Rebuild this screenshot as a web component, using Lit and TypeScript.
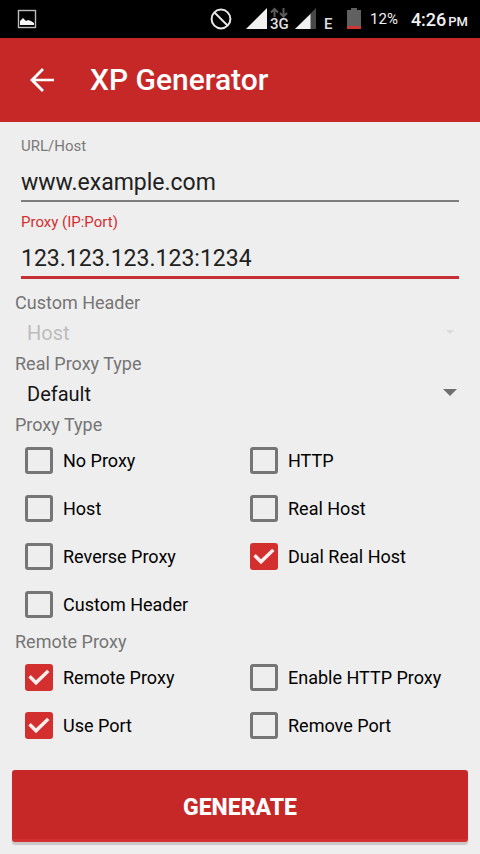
import { LitElement, html, svg, css } from "lit";
import { customElement, property, state } from "lit/decorators.js";

@customElement("status-bar")
class StatusBar extends LitElement {
  static styles = css`
    :host {
      display: flex;
      align-items: center;
      height: 38px;
      padding: 0 12px 0 17px;
      background: #000;
      color: #f0f0f0;
      font-family: Roboto, sans-serif;
    }
    svg {
      display: block;
      flex: none;
    }
    .spacer {
      flex: 1;
    }
    .signals {
      margin-left: 14px;
    }
    .battery {
      margin-left: 11px;
    }
    .percent {
      margin-left: 9px;
      font-size: 15px;
    }
    .clock {
      display: flex;
      align-items: baseline;
      gap: 2px;
      margin-left: 13px;
      font-size: 18px;
      font-weight: 500;
      white-space: nowrap;
    }
    .meridiem {
      font-size: 13px;
    }
    .net {
      font: 500 15px Roboto, sans-serif;
      fill: #e0e0e0;
    }
  `;

  render() {
    return html`
      <svg width="20" height="20" viewBox="0 0 20 20" aria-hidden="true">
        <rect x="1.5" y="1.5" width="17" height="17" fill="none" stroke="#bdbdbd" stroke-width="1.4" />
        <path d="M3 16v-4l3-3 3 3 2-1 3 1 3 2v2z" fill="#f5f5f5" />
      </svg>
      <span class="spacer"></span>
      <svg width="22" height="22" viewBox="0 0 22 22" aria-hidden="true">
        <g fill="none" stroke="#e8e8e8" stroke-width="2">
          <circle cx="11" cy="11" r="9.4" />
          <path d="M4.5 4.5l13 13" />
        </g>
      </svg>
      <svg class="signals" width="90" height="30" viewBox="0 -3 90 30" aria-hidden="true">
        <path d="M21 1v21H0z" fill="#f0f0f0" />
        <g fill="none" stroke="#5a5a5a" stroke-width="2">
          <path d="M28.500 10V3M25 5.500l3.500-3.500 3.500 3.500" />
          <path d="M37.500 1v7M34 6l3.500 3.500L41 6" />
        </g>
        <text class="net" x="24" y="22">3G</text>
        <path d="M70 1v21H49z" fill="#484848" />
        <path d="M64.500 7v15H49z" fill="#f0f0f0" />
        <text class="net" x="78" y="22">E</text>
      </svg>
      <svg class="battery" width="14" height="24" viewBox="0 0 14 24" aria-hidden="true">
        <path d="M4 1h6v2h4v19H0V3h4z" fill="#606060" />
        <path d="M0 19h14v3H0z" fill="#c93a35" />
      </svg>
      <span class="percent">12%</span>
      <span class="clock"><span>4:26</span><span class="meridiem">PM</span></span>
    `;
  }
}

@customElement("proxy-field")
class ProxyField extends LitElement {
  @property() label = "";
  @property() value = "";
  @property({ type: Boolean, reflect: true }) active = false;

  static styles = css`
    :host {
      display: block;
      font-family: Roboto, sans-serif;
    }
    label {
      display: block;
      height: 20px;
      line-height: 20px;
      font-size: 15px;
      color: #7a7a7a;
    }
    input {
      box-sizing: border-box;
      display: block;
      width: 100%;
      height: 46px;
      margin-bottom: 10px;
      padding: 8px 0 0;
      border: 0;
      border-bottom: 2px solid #7d7d7d;
      border-radius: 0;
      background: transparent;
      outline: none;
      font: 23px Roboto, sans-serif;
      color: #212121;
    }
    :host([active]) label {
      color: #d32f2f;
    }
    :host([active]) input {
      height: 47px;
      border-bottom: 3px solid #c62f33;
    }
  `;

  render() {
    return html`
      <label for="field">${this.label}</label>
      <input id="field" type="text" .value=${this.value} />
    `;
  }
}

@customElement("proxy-select")
class ProxySelect extends LitElement {
  @property() label = "";
  @property() value = "";
  @property({ type: Boolean, reflect: true }) disabled = false;

  static styles = css`
    :host {
      display: block;
      font-family: Roboto, sans-serif;
    }
    label {
      display: block;
      height: 24px;
      line-height: 24px;
      font-size: 18px;
      color: #757575;
    }
    .spinner {
      display: grid;
      align-items: center;
      height: 37px;
    }
    select,
    svg {
      grid-area: 1 / 1;
    }
    select {
      appearance: none;
      width: 100%;
      height: 37px;
      padding: 0 36px 2px 12px;
      border: 0;
      background: transparent;
      font: 20px Roboto, sans-serif;
      color: #151515;
      opacity: 1;
    }
    svg {
      justify-self: end;
      margin: 0 8px 4px 0;
      fill: #6f6f6f;
      pointer-events: none;
    }
    :host([disabled]) select {
      color: #bcbcbc;
    }
    :host([disabled]) svg {
      fill: #dadada;
    }
  `;

  render() {
    return html`
      <label for="choice">${this.label}</label>
      <div class="spinner">
        <select id="choice" ?disabled=${this.disabled}>
          <option>${this.value}</option>
        </select>
        <svg width="14" height="10" viewBox="0 0 14 10" aria-hidden="true">
          ${this.disabled ? svg`<path d="M3 3h8L7 7z" />` : svg`<path d="M0 1h14L7 8z" />`}
        </svg>
      </div>
    `;
  }
}

@customElement("proxy-check")
class ProxyCheck extends LitElement {
  @property() label = "";
  @property({ type: Boolean }) checked = false;

  static styles = css`
    :host {
      display: block;
      font-family: Roboto, sans-serif;
    }
    label {
      display: flex;
      align-items: flex-start;
      gap: 10px;
      height: 38px;
      padding: 10px 0 0 10px;
      font-size: 18px;
      line-height: 28px;
      color: #000;
      white-space: nowrap;
    }
    .box {
      display: grid;
      flex: none;
      width: 28px;
      height: 27px;
    }
    input,
    svg {
      grid-area: 1 / 1;
    }
    input {
      appearance: none;
      box-sizing: border-box;
      width: 28px;
      height: 27px;
      margin: 0;
      border: 3px solid #757575;
      border-radius: 3px;
    }
    input:checked {
      border-color: #d32f2f;
      background: #d32f2f;
    }
    svg {
      display: none;
      fill: #fbeeee;
      pointer-events: none;
    }
    input:checked + svg {
      display: block;
    }
  `;

  render() {
    return html`
      <label>
        <span class="box">
          <input type="checkbox" .checked=${this.checked} />
          <svg width="28" height="27" viewBox="3 3 18 18" aria-hidden="true">
            <path d="M10 17.200l-5.100-5.200 1.600-1.600 3.500 3.500 7.400-7.100 1.600 1.600z" />
          </svg>
        </span>
        <span>${this.label}</span>
      </label>
    `;
  }
}

interface Choice {
  label: string;
  checked?: boolean;
}

@customElement("app-root")
class AppRoot extends LitElement {
  @state() private proxyTypes: Choice[] = [
    { label: "No Proxy" },
    { label: "HTTP" },
    { label: "Host" },
    { label: "Real Host" },
    { label: "Reverse Proxy" },
    { label: "Dual Real Host", checked: true },
    { label: "Custom Header" },
  ];

  @state() private remoteOptions: Choice[] = [
    { label: "Remote Proxy", checked: true },
    { label: "Enable HTTP Proxy" },
    { label: "Use Port", checked: true },
    { label: "Remove Port" },
  ];

  static styles = css`
    :host {
      display: flex;
      flex-direction: column;
      min-height: 100vh;
      background: #eee;
      font-family: Roboto, sans-serif;
    }
    .toolbar {
      display: flex;
      align-items: center;
      gap: 30px;
      height: 84px;
      padding: 0 24px;
      background: #c62828;
      color: #fff;
    }
    .back {
      display: block;
      width: 36px;
      height: 36px;
      padding: 0;
      border: 0;
      background: none;
    }
    .back svg {
      display: block;
      fill: #fff;
    }
    h1 {
      margin: 0;
      font-size: 30px;
      font-weight: 500;
      line-height: 36px;
    }
    form {
      display: block;
    }
    .fields {
      padding: 14px 21px 2px;
    }
    .options {
      display: flex;
      flex-direction: column;
      padding: 0 15px;
    }
    fieldset {
      min-width: 0;
      margin: 0;
      padding: 0;
      border: 0;
    }
    fieldset + fieldset {
      margin-top: 1px;
    }
    legend {
      height: 24px;
      padding: 0;
      font-size: 18px;
      line-height: 24px;
      color: #757575;
    }
    .checks {
      display: grid;
      grid-template-columns: 1fr 1fr;
    }
    .generate {
      display: block;
      width: calc(100% - 24px);
      height: 72px;
      margin: 20px 12px 12px;
      padding: 6px 0 0;
      border: 0;
      border-bottom: 3px solid #d32f2f;
      border-radius: 3px;
      background: #c62828;
      box-shadow: 0 3px 1px #c8c8c8;
      color: #fff;
      font: 800 23px Roboto, sans-serif;
    }
  `;

  private checks(items: Choice[]) {
    return html`
      <div class="checks">
        ${items.map(
          (item) => html`<proxy-check .label=${item.label} .checked=${item.checked ?? false}></proxy-check>`
        )}
      </div>
    `;
  }

  render() {
    return html`
      <status-bar></status-bar>
      <header class="toolbar">
        <button class="back" type="button" aria-label="Back">
          <svg width="36" height="36" viewBox="0 0 24 24" aria-hidden="true">
            <path d="M20 11.100H7.600l5.700-5.800L12 4l-8 8 8 8 1.300-1.300-5.700-5.800H20z" />
          </svg>
        </button>
        <h1>XP Generator</h1>
      </header>
      <form @submit=${(e: Event) => e.preventDefault()}>
        <div class="fields">
          <proxy-field label="URL/Host" value="www.example.com"></proxy-field>
          <proxy-field label="Proxy (IP:Port)" value="123.123.123.123:1234" active></proxy-field>
        </div>
        <div class="options">
          <proxy-select label="Custom Header" value="Host" disabled></proxy-select>
          <proxy-select label="Real Proxy Type" value="Default"></proxy-select>
          <fieldset>
            <legend>Proxy Type</legend>
            ${this.checks(this.proxyTypes)}
          </fieldset>
          <fieldset>
            <legend>Remote Proxy</legend>
            ${this.checks(this.remoteOptions)}
          </fieldset>
        </div>
        <button class="generate" type="submit">GENERATE</button>
      </form>
    `;
  }
}
